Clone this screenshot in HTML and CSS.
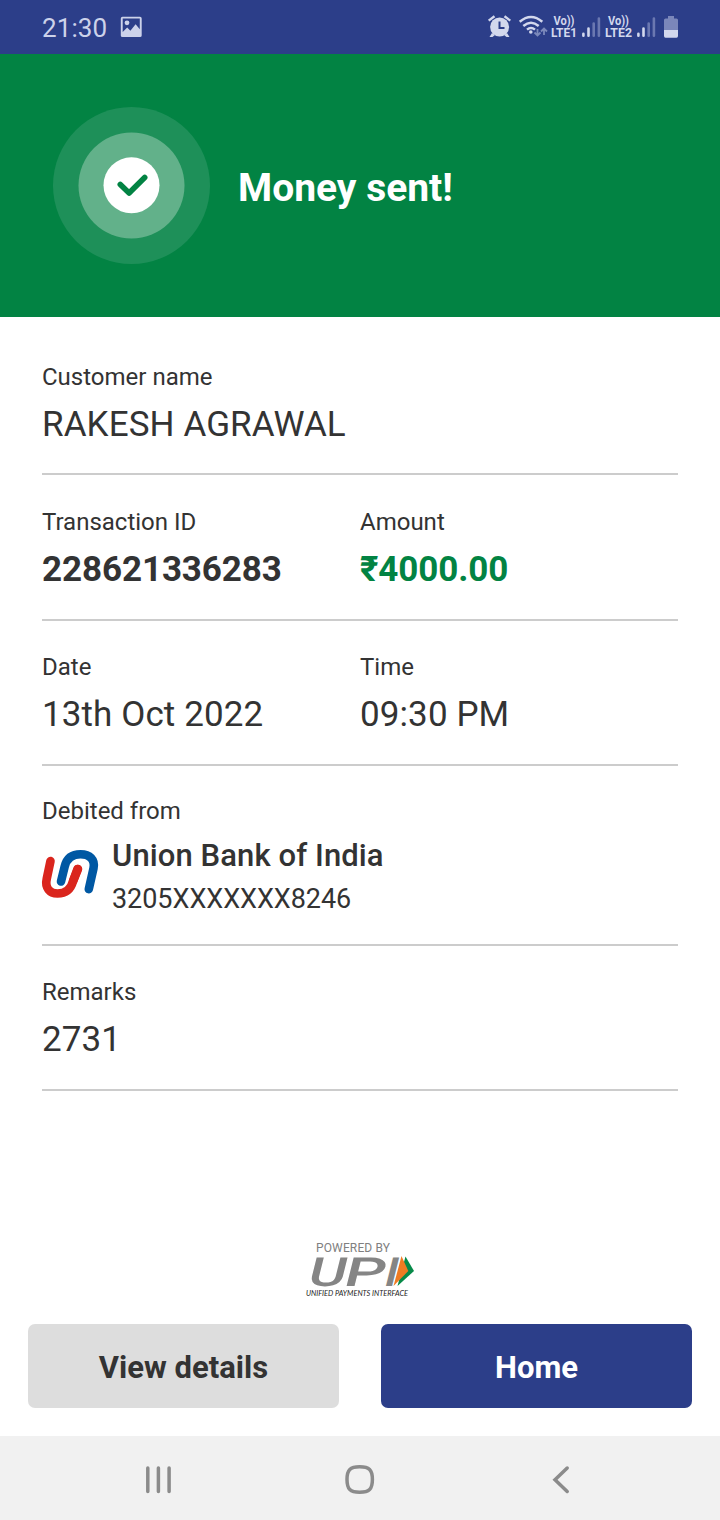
FILE: index.html
```html
<!DOCTYPE html>
<html lang="en">
<head>
<meta charset="utf-8">
<title>Money sent</title>
<link rel="stylesheet" href="styles.css">
</head>
<body>
<div class="screen">
  <header class="status">
    <span class="clock">21:30</span>
    <svg class="pic" width="22" height="22" viewBox="0 0 22 22"><path fill="#ccd2ea" fill-rule="evenodd" d="M2.500 .7h17.500q1.700 0 1.700 1.700v17q0 1.700-1.700 1.700H2.500q-1.700 0-1.700-1.700V2.400Q.8.700 2.500 .7zM2.700 2.600v13.500l4.500-4.700 3.200 3.400 5.200-6.500 4.200 5V2.600z"/><circle cx="7" cy="6.800" r="2.400" fill="#ccd2ea"/></svg>
    <svg class="tray" width="204" height="54" viewBox="480 0 204 54">
      <g fill="#d3d8ed">
        <circle cx="499.600" cy="27" r="9.500"/>
        <path d="M492 33l-2.500 4h3l2.500-2zM507 33l2.500 4h-3l-2.500-2z"/>
      </g>
      <g fill="none" stroke="#d3d8ed" stroke-width="2.400"><path d="M488.700 20.600l5.800-4.300M504.500 16.300l5.800 4.300"/></g>
      <path d="M499.500 21.500v6.500h5" fill="none" stroke="#2c3e89" stroke-width="2"/>
      <g fill="none" stroke="#d3d8ed" stroke-width="2.500"><path d="M519.700 21.800q11.300-9.600 22.600 0M523.300 26q7.700-6.500 15.400 0M527 29.600q4-3.300 8 0"/></g>
      <circle cx="530.800" cy="32" r="1.800" fill="#d3d8ed"/>
      <g fill="none" stroke="#7c89bb" stroke-width="1.800"><path d="M537.500 29v6M534.500 32.500l3 3 3-3M544 35v-6M541 31.500l3-3 3 3"/></g>
      <g class="volte" fill="#d3d8ed">
        <text x="553.500" y="25" textLength="21" lengthAdjust="spacingAndGlyphs">Vo))</text><text x="551" y="37" textLength="26" lengthAdjust="spacingAndGlyphs">LTE1</text>
        <text x="608" y="25" textLength="21" lengthAdjust="spacingAndGlyphs">Vo))</text><text x="605" y="37" textLength="27" lengthAdjust="spacingAndGlyphs">LTE2</text>
      </g>
      <g stroke-width="2.600" stroke-linecap="round"><path stroke="#d3d8ed" d="M583.400 33.800v2M588.500 28.500v7.300M638.400 33.800v2M643.500 28.500v7.300"/><path stroke="#6b78b1" d="M593.700 23.500v12.300M598.900 18.500v17.300M648.700 23.500v12.300M653.900 18.500v17.300"/></g>
      <path fill="#7b87ba" d="M668 16h6v2.500h2.500q1.500 0 1.500 1.500v10h-14v-10q0-1.500 1.500-1.500h2.500z"/><path fill="#d3d8ed" d="M664 30h14v6q0 1.700-1.500 1.700h-11q-1.500 0-1.500-1.700z"/>
    </svg>
  </header>
  <section class="banner">
    <svg class="badge" width="158" height="158" viewBox="0 0 158 158"><circle cx="79.500" cy="78.500" r="78.500" fill="#1e9059"/><circle cx="79.500" cy="78.500" r="53" fill="#62b18a"/><circle cx="79.500" cy="78.300" r="28" fill="#fff"/><path d="M68.300 77.500l8.800 8.500 15.600-15.500" fill="none" stroke="#028343" stroke-width="5.600" stroke-linecap="round" stroke-linejoin="round"/></svg>
    <h1 class="title">Money sent!</h1>
  </section>
  <main class="details">
    <div class="row first"><div class="cell"><div class="label">Customer name</div><div class="value">RAKESH AGRAWAL</div></div></div>
    <div class="row"><div class="cell"><div class="label">Transaction ID</div><div class="value strong">228621336283</div></div><div class="cell"><div class="label">Amount</div><div class="value strong green">₹4000.00</div></div></div>
    <div class="row short"><div class="cell"><div class="label">Date</div><div class="value">13th Oct 2022</div></div><div class="cell"><div class="label">Time</div><div class="value">09:30 PM</div></div></div>
    <div class="row account"><div class="cell"><div class="label">Debited from</div>
      <div class="bank">
        <svg width="60" height="52" viewBox="40 847 60 52"><g fill="none" stroke-width="8.600" stroke-linecap="round"><path stroke="#da251d" d="M50.500 861l-3.700 17.500c-2.200 9.500 3 15 10.700 15 8.500 0 13.500-4.500 15.600-12.500l4.900-12"/><path stroke="#fff" stroke-width="10" d="M61.500 878l3-13"/><path stroke="#0058a3" d="M61 881.500l3.700-15c2-8 7.500-12.200 15.800-12.200 9.200 0 14.800 5.400 13 14l-4.700 20.800"/><path stroke="#da251d" d="M73.100 881l4.400-12"/></g></svg>
        <div class="bankinfo"><div class="bankname">Union Bank of India</div><div class="number">3205XXXXXXX8246</div></div>
      </div></div></div>
    <div class="row short"><div class="cell"><div class="label">Remarks</div><div class="value">2731</div></div></div>
  </main>
  <footer class="foot">
    <svg class="upi" width="130" height="62" viewBox="295 1238 130 62">
      <text class="powered" x="316" y="1252" textLength="74">POWERED BY</text>
      <g class="mark" transform="translate(307 1286) skewX(-14)"><text x="-1" y="0" textLength="38" lengthAdjust="spacingAndGlyphs">U</text><text x="35" y="0" textLength="41" lengthAdjust="spacingAndGlyphs">P</text><text x="75" y="0" textLength="14" lengthAdjust="spacingAndGlyphs">I</text></g>
      <path fill="#078a49" d="M405.500 1256.500l8.500 14.500-16.500 15z"/><path fill="#ef7b23" d="M401.500 1256l6.800 15-14.800 15z"/>
      <text class="tag" x="306" y="1295.500" textLength="102" lengthAdjust="spacingAndGlyphs">UNIFIED PAYMENTS INTERFACE</text>
    </svg>
    <div class="actions"><button class="btn">View details</button><button class="btn primary">Home</button></div>
  </footer>
  <nav class="nav">
    <svg width="30" height="30" viewBox="0 0 30 30"><path d="M4.800 3v23.500M15.400 3v23.500M26.100 3v23.500"/></svg>
    <svg width="30" height="30" viewBox="0 0 30 30"><path d="M14.700 1.800c9.500 0 12.700 3 12.700 12.700s-3.200 12.800-12.700 12.800S2 24.200 2 14.500 5.200 1.800 14.700 1.800z"/></svg>
    <svg width="30" height="30" viewBox="0 0 30 30"><path d="M20.200 3L8 14.700l12.200 11.800"/></svg>
  </nav>
</div>
</body>
</html>
```
FILE: styles.css
```css
* { box-sizing: border-box; }
body { margin: 0; font-family: Roboto, "Liberation Sans", sans-serif; color: #333; background: #fff; }
.screen { width: 720px; height: 1520px; display: flex; flex-direction: column; }
.status { height: 54px; flex: none; background: #2c3e89; display: flex; align-items: center; padding: 0 36px 0 42px; }
.clock { color: #ccd2ea; font-size: 26px; line-height: 54px; width: 78px; padding-top: 2px; letter-spacing: 0.1px; }
.tray { margin-left: auto; }
.volte text { font-size: 12.5px; font-weight: 700; }
.banner { height: 263px; flex: none; background: #028343; display: flex; align-items: center; padding-left: 52px; gap: 28px; }
.title { margin: 4px 0 0; color: #fff; font-size: 39px; line-height: 46px; font-weight: 700; }
.details { padding: 0 42px; }
.row { height: 146px; border-bottom: 2px solid #ccc; padding-top: 32px; display: grid; grid-template-columns: 318px 1fr; }
.row.first { height: 158px; padding-top: 45px; }
.row.short { height: 145px; padding-top: 31px; }
.row.account { height: 180px; padding-top: 30px; grid-template-columns: 1fr; }
.label { font-size: 24px; line-height: 30px; }
.value { font-size: 35px; line-height: 42px; margin-top: 12px; white-space: nowrap; letter-spacing: 0.1px; }
.strong { font-weight: 700; letter-spacing: -0.1px; }
.green { color: #028343; }
.bank { display: flex; margin-left: -2px; gap: 12px; }
.bank svg { margin-top: 21px; }
.bankname { font-size: 31px; line-height: 38px; margin-top: 11px; font-weight: 500; letter-spacing: 0.1px; }
.number { font-size: 27px; line-height: 32px; margin-top: 8px; letter-spacing: -0.05px; }
.foot { margin-top: auto; padding: 0 28px 28px; display: flex; flex-direction: column; }
.upi { align-self: center; margin-bottom: 24px; }
.powered { font-size: 12px; fill: #808080; }
.mark { font-family: Roboto, sans-serif; font-size: 40px; font-weight: 500; fill: #858585; }
.tag { font-family: Lato, sans-serif; font-size: 7.500px; font-style: italic; fill: #222; }
.actions { display: grid; grid-template-columns: 1fr 1fr; gap: 42px; }
.btn { height: 84px; border: 0; border-radius: 7px; background: #ddd; color: #333; font: 700 31px/36px Roboto, sans-serif; padding: 4px 0 0; }
.primary { background: #2c3e89; color: #fff; }
.nav { height: 84px; flex: none; background: #f1f1f1; display: flex; justify-content: space-between; padding: 29px 143px 0 143px; }
.nav path { fill: none; stroke: #8b8b8b; stroke-width: 3.500; stroke-linecap: round; }
```
